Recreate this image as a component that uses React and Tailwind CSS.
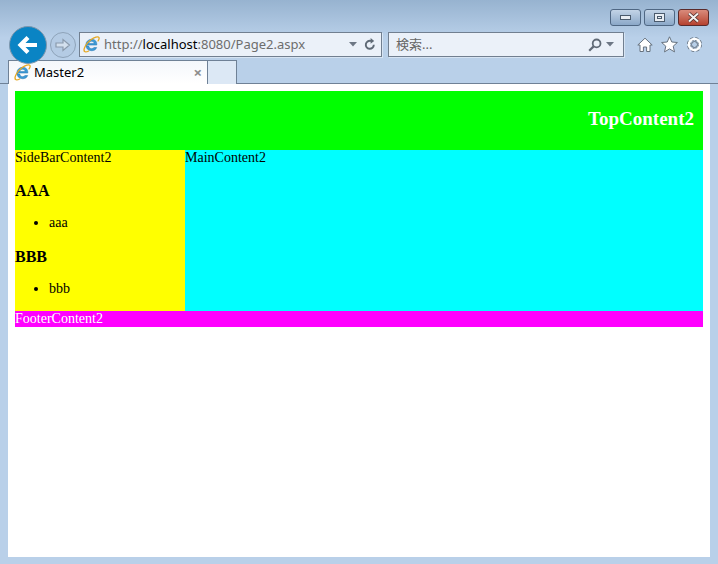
import React from 'react'

const uiFont = { fontFamily: '"Noto Sans", "Noto Sans CJK JP", sans-serif' }

function IeLogo({ size = 18 }) {
  return (
    <svg width={size} height={size} viewBox="0 0 18 18" className="shrink-0">
      <path d="M4.2 9.6 H14.6 C15 5.9 12.6 3.4 9.3 3.4 C5.6 3.4 3 6 3 9.6 C3 13.3 5.7 15.6 9.2 15.6 C11.8 15.6 13.7 14.4 14.5 12.2 H11.6 C11 13 10.3 13.4 9.2 13.4 C7.5 13.4 6.2 12.3 6.1 10.6 H4.2 Z M6.2 7.9 C6.4 6.4 7.6 5.5 9.1 5.5 C10.6 5.5 11.7 6.4 11.8 7.9 Z" fill="#3d9bd6" stroke="#1f6fae" strokeWidth="0.5" />
      <path d="M1.4 16 C0 13.6 3.8 7.2 8.4 3.9 C12 1.3 16 0.2 16.9 1.6 C17.4 2.5 16.8 4 16 5.2" fill="none" stroke="#e5a823" strokeWidth="1.4" strokeLinecap="round" />
      <path d="M1.4 16 C2.2 17.2 4.2 16.8 6 15.8" fill="none" stroke="#e5a823" strokeWidth="1.2" strokeLinecap="round" />
    </svg>
  )
}

function WinButton({ className, children }) {
  return (
    <div className={`flex h-[17px] items-center justify-center rounded-[3px] border border-[#4f6783] ${className}`}>
      {children}
    </div>
  )
}

function Chrome() {
  return (
    <div className="bg-gradient-to-b from-[#97b3d0] from-0% to-[#b9d0e9] to-[45%]" style={uiFont}>
      {/* title bar */}
      <div className="flex h-[32px] justify-end gap-[3px] pt-[9px] pr-[9px]">
        <WinButton className="w-[31px] bg-gradient-to-b from-[#c3d4e7] to-[#8ba8c8]">
          <div className="h-[5px] w-[11px] border border-[#4a5a6c] bg-[#e8edf3]" />
        </WinButton>
        <WinButton className="w-[31px] bg-gradient-to-b from-[#c3d4e7] to-[#8ba8c8]">
          <div className="flex h-[9px] w-[11px] items-center justify-center border border-[#4a5a6c] bg-[#e8edf3]">
            <div className="h-[3px] w-[5px] border border-[#4a5a6c]" />
          </div>
        </WinButton>
        <WinButton className="w-[31px] border-[#5a2a2a] bg-gradient-to-b from-[#d98b7c] to-[#b5412f]">
          <svg width="13" height="11" viewBox="0 0 13 11">
            <path d="M2 1.5 L11 9.5 M11 1.5 L2 9.5" stroke="#3f1f1f" strokeWidth="3.4" />
            <path d="M2 1.5 L11 9.5 M11 1.5 L2 9.5" stroke="#f3f0ee" strokeWidth="2.2" />
          </svg>
        </WinButton>
      </div>

      {/* nav row */}
      <div className="flex h-[25px] items-center pl-[9px]">
        <div className="z-10 -my-[7px] flex h-[38px] w-[38px] shrink-0 items-center justify-center rounded-full border border-[#7f97ad] bg-[#0a84c4]">
          <svg width="26" height="24" viewBox="0 0 26 24">
            <path d="M22 12 H6 M13 4.5 L5.5 12 L13 19.5" fill="none" stroke="#fff" strokeWidth="4.2" />
          </svg>
        </div>
        <div className="ml-[3px] flex h-[26px] w-[26px] shrink-0 items-center justify-center rounded-full border border-[#8ea3b9] bg-[#b4cbe4]">
          <svg width="18" height="16" viewBox="0 0 18 16">
            <path d="M2 6 H9 V2.5 L15.5 8 L9 13.5 V10 H2 Z" fill="#d3e0ee" stroke="#8a9aac" strokeWidth="1.2" />
          </svg>
        </div>
        <div className="ml-[3px] flex h-[25px] w-[303px] shrink-0 items-center border border-[#717f90] bg-[#ebf1f9] pl-[3px] shadow-[1px_1px_0_#d6e4f3]">
          <IeLogo size={17} />
          <span className="ml-[4px] text-[13px] text-[#6d6d6d]">
            http://<span className="text-black">localhost</span>:8080/Page2.aspx
          </span>
          <svg width="8" height="5" viewBox="0 0 8 5" className="ml-auto">
            <path d="M0 0 H8 L4 4.5 Z" fill="#6d7785" />
          </svg>
          <svg width="12" height="13" viewBox="0 0 12 13" className="mr-[5px] ml-[7px]">
            <path d="M9.8 6.8 A4 4 0 1 1 7 3" fill="none" stroke="#5f6a76" strokeWidth="1.9" />
            <path d="M6.6 0 L10.2 3 L6.6 5.8 Z" fill="#5f6a76" />
          </svg>
        </div>
        <div className="ml-[6px] flex h-[25px] w-[236px] shrink-0 items-center border border-[#717f90] bg-[#ebf1f9] pl-[7px] shadow-[1px_1px_0_#d6e4f3]">
          <span className="text-[13px] text-[#666]">検索...</span>
          <svg width="14" height="14" viewBox="0 0 14 14" className="ml-auto">
            <circle cx="8.6" cy="5.4" r="3.9" fill="none" stroke="#616b77" strokeWidth="1.8" />
            <path d="M5.6 8.4 L1.2 12.8" stroke="#616b77" strokeWidth="2.2" />
          </svg>
          <svg width="8" height="5" viewBox="0 0 8 5" className="mr-[9px] ml-[4px]">
            <path d="M0 0 H8 L4 4.5 Z" fill="#6d7785" />
          </svg>
        </div>
        <div className="ml-[13px] flex items-center gap-[8px]">
          <svg width="16" height="16" viewBox="0 0 16 16">
            <path d="M8 1.2 L15.2 8 H13 V14.5 H9.6 V10 H6.4 V14.5 H3 V8 H0.8 Z" fill="#fff" stroke="#66727f" strokeWidth="1" strokeLinejoin="round" />
          </svg>
          <svg width="17" height="17" viewBox="0 0 17 17">
            <path d="M8.5 0.8 L10.8 6 L16.4 6.5 L12.2 10.2 L13.5 15.9 L8.5 12.9 L3.5 15.9 L4.8 10.2 L0.6 6.5 L6.2 6 Z" fill="#fff" stroke="#66727f" strokeWidth="1" strokeLinejoin="round" />
          </svg>
          <svg width="17" height="17" viewBox="0 0 17 17">
            <circle cx="8.5" cy="8.5" r="5.6" fill="none" stroke="#66727f" strokeWidth="3.8" strokeDasharray="2.6 1.8" />
            <circle cx="8.5" cy="8.5" r="5.6" fill="none" stroke="#fff" strokeWidth="2.4" />
            <circle cx="8.5" cy="8.5" r="3" fill="none" stroke="#66727f" strokeWidth="1" />
          </svg>
        </div>
      </div>

      {/* tab row */}
      <div className="flex h-[27px] items-end border-b border-[#6f8196] pl-[8px]">
        <div className="-mb-px flex h-[24px] w-[200px] items-center border border-b-0 border-[#6f8196] bg-gradient-to-b from-[#f4f7fb] to-white pl-[5px]">
          <IeLogo size={17} />
          <span className="ml-[3px] text-[13px] text-black">Master2</span>
          <span className="mr-[5px] ml-auto text-[15px] leading-none font-bold text-[#8d8d8d]">×</span>
        </div>
        <div className="-mb-px h-[24px] w-[29px] border border-b-0 border-l-0 border-[#6f8196] bg-[#dce8f5]" />
      </div>
    </div>
  )
}

export default function App() {
  return (
    <div className="flex h-[564px] w-[718px] flex-col overflow-hidden bg-[#b9d0e9]">
      <Chrome />
      <div className="mx-[8px] mb-[7px] flex-1 bg-white p-[7px]" style={{ fontFamily: '"Liberation Serif", serif' }}>
        <div className="flex h-[59px] items-center justify-end bg-[#00ff00] pr-[9px] pb-[2px] text-[19px] font-bold text-white">
          TopContent2
        </div>
        <div className="flex h-[161px] text-[14px] text-black">
          <div className="w-[170px] bg-[#ffff00]">
            <div className="h-[16px] leading-[16px]">SideBarContent2</div>
            <h4 className="mt-[16px] h-[18px] text-[16px] leading-[18px] font-bold">AAA</h4>
            <ul className="mt-[15px] list-disc pl-[34px]">
              <li className="h-[16px] leading-[16px]">aaa</li>
            </ul>
            <h4 className="mt-[17px] h-[18px] text-[16px] leading-[18px] font-bold">BBB</h4>
            <ul className="mt-[15px] list-disc pl-[34px]">
              <li className="h-[16px] leading-[16px]">bbb</li>
            </ul>
          </div>
          <div className="flex-1 bg-[#00ffff] leading-[16px]">MainContent2</div>
        </div>
        <div className="h-[16px] bg-[#ff00ff] text-[14px] leading-[16px] text-white">FooterContent2</div>
      </div>
    </div>
  )
}
